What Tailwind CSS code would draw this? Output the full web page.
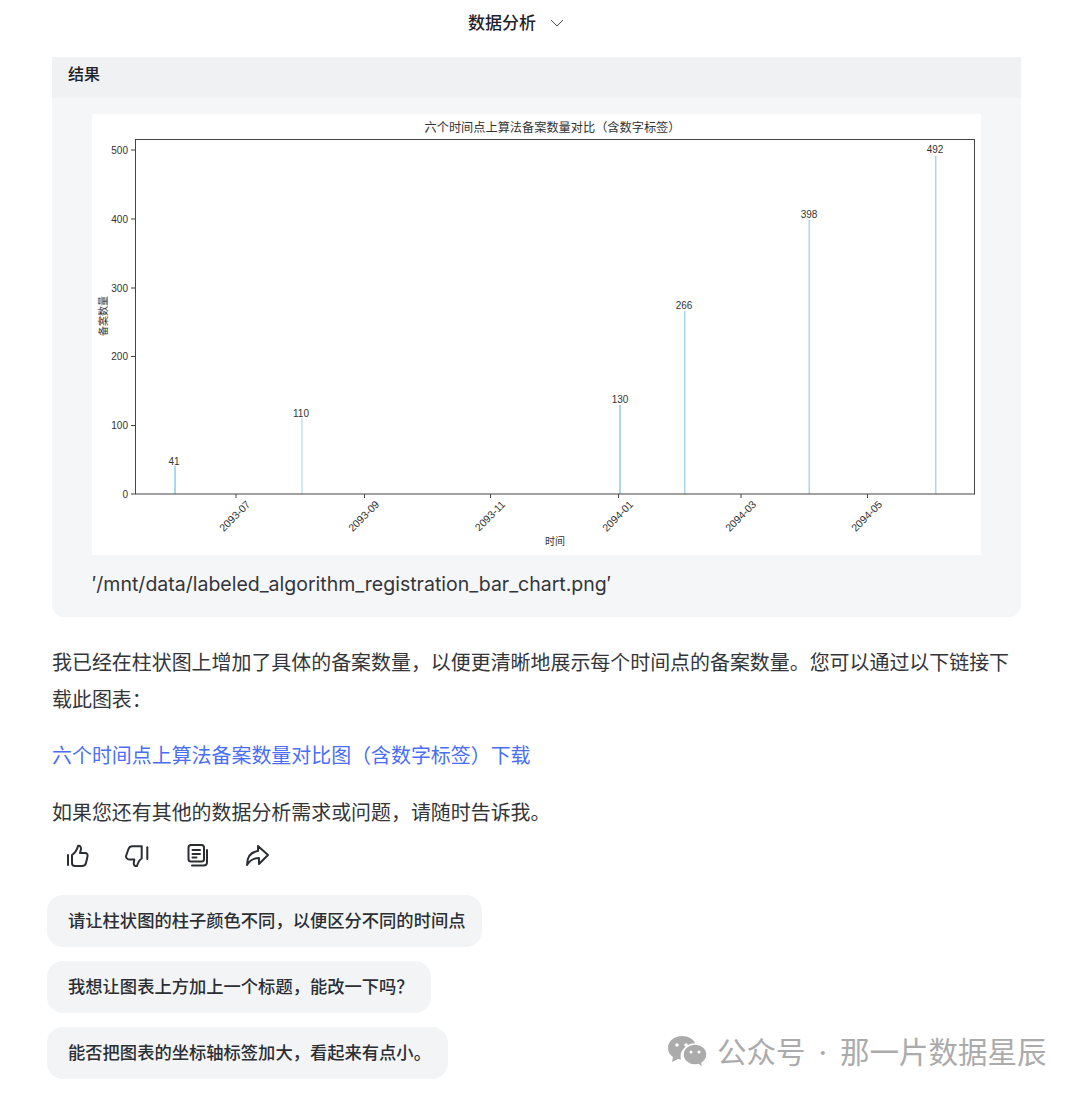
<!DOCTYPE html>
<html lang="zh-CN">
<head>
    <meta charset="UTF-8">
    <title>数据分析</title>
    <script src="https://cdn.jsdelivr.net/npm/@tailwindcss/browser@4"></script>
</head>
<body class="bg-white font-['Inter','Noto_Sans_CJK_SC',sans-serif] text-[#333538]">
<div class="relative w-[1080px] h-[1094px] overflow-hidden">

    <!-- Title -->
    <div class="h-[46px] flex items-center justify-center gap-[14px] pr-[48px] text-[17px] leading-[46px] font-medium text-[#1f2329]">
        <span>数据分析</span>
        <svg class="w-[14px] h-[8px]" viewBox="0 0 14 8" fill="none" stroke="#4a4d52" stroke-width="1"><path d="M1 1l6 6 6-6"/></svg>
    </div>

    <!-- Result card -->
    <div class="ml-[52px] mt-[11px] w-[969px] h-[560px] bg-[#f5f6f8] rounded-b-xl">
        <div class="h-[41px] pl-4 bg-[#f0f1f3] text-base leading-[35px] font-medium text-[#1f2329]">结果</div>
        <div class="pl-10 pt-4">
            <svg class="block w-[889px] h-[441px] bg-white" viewBox="92 114 889 441" font-family="'Liberation Sans','Noto Sans CJK SC',sans-serif" fill="#333">
                <text x="552.500" y="132" font-size="12.200" text-anchor="middle" font-family="'Noto Sans CJK SC',sans-serif">六个时间点上算法备案数量对比（含数字标签）</text>
                <!-- bars -->
                <g fill="#a9d7f0">
                    <rect x="174" y="466" width="2" height="28"/>
                    <rect x="301" y="418" width="2" height="76" fill="#d3e9f6"/>
                    <rect x="619" y="405" width="2" height="89"/>
                    <rect x="684" y="311" width="1.500" height="183"/>
                    <rect x="808.500" y="220" width="1.500" height="274"/>
                    <rect x="935" y="156" width="1.500" height="338"/>
                </g>
                <!-- plot frame -->
                <rect x="135.500" y="139.500" width="839" height="354.500" fill="none" stroke="#444" stroke-width="1"/>
                <!-- ticks -->
                <g stroke="#444" stroke-width="1">
                    <path d="M131 150h4M131 219h4M131 288h4M131 356.500h4M131 425.500h4M131 494h4"/>
                    <path d="M236 494v4M364.500 494v4M490.500 494v4M618.500 494v4M741 494v4M867.500 494v4"/>
                </g>
                <g font-size="10" text-anchor="end">
                    <text x="128" y="154">500</text>
                    <text x="128" y="223">400</text>
                    <text x="128" y="292">300</text>
                    <text x="128" y="360">200</text>
                    <text x="128" y="429">100</text>
                    <text x="128" y="498">0</text>
                </g>
                <!-- value labels -->
                <g font-size="10" text-anchor="middle">
                    <text x="174" y="465">41</text>
                    <text x="301" y="417">110</text>
                    <text x="620" y="403">130</text>
                    <text x="684" y="309">266</text>
                    <text x="809" y="218">398</text>
                    <text x="935" y="153">492</text>
                </g>
                <!-- x labels -->
                <g font-size="10.500" text-anchor="end">
                    <text transform="translate(251 505) rotate(-45)">2093-07</text>
                    <text transform="translate(380 505) rotate(-45)">2093-09</text>
                    <text transform="translate(506 505) rotate(-45)">2093-11</text>
                    <text transform="translate(634 505) rotate(-45)">2094-01</text>
                    <text transform="translate(757 505) rotate(-45)">2094-03</text>
                    <text transform="translate(883 505) rotate(-45)">2094-05</text>
                </g>
                <text x="555" y="545" font-size="10" text-anchor="middle" font-family="'Noto Sans CJK SC',sans-serif">时间</text>
                <text transform="translate(107 316) rotate(-90)" font-size="10" text-anchor="middle" font-family="'Noto Sans CJK SC',sans-serif">备案数量</text>
            </svg>
            <p class="mt-[14px] text-[19.500px] leading-[30px]">′/mnt/data/labeled_algorithm_registration_bar_chart.png′</p>
        </div>
    </div>

    <!-- Answer text -->
    <div class="ml-[52px] w-[969px] mt-[28px] text-[19.950px] leading-[37px]">
        <p>我已经在柱状图上增加了具体的备案数量，以便更清晰地展示每个时间点的备案数量。您可以通过以下链接下载此图表：</p>
        <p class="mt-[19px] text-[#4a6ef5]">六个时间点上算法备案数量对比图（含数字标签）下载</p>
        <p class="mt-[20px]">如果您还有其他的数据分析需求或问题，请随时告诉我。</p>
    </div>

    <!-- Actions -->
    <div class="ml-[65px] mt-[11px] flex items-center gap-[36px] text-[#2b2e33]">
        <svg class="w-6 h-6" viewBox="0 0 24 24" fill="none" stroke="currentColor" stroke-width="2" stroke-linejoin="round" stroke-linecap="round"><path d="M3 12v10"/><path d="M7 12c3-2 5-5 6-9 2-1 3 1 3 3l-1 4h5c2 0 3 1.500 2.500 3.500L21 20c-.5 2-2 3-4 3H10c-1.500 0-3-1-3-3z"/></svg>
        <svg class="w-6 h-6" viewBox="0 0 24 24" fill="none" stroke="currentColor" stroke-width="2" stroke-linejoin="round" stroke-linecap="round"><path d="M22.300 4.300V16"/><path d="M16.700 3.300V15.500c-2.500 1.500-3.700 4-4.700 7.500-2 .5-3.500-1-3.200-3l.5-3.500H4.500C2 16.500.6 14.500 1.200 12.500L3.500 6c.6-1.800 2-2.700 4-2.700z"/></svg>
        <svg class="w-6 h-6" viewBox="0 0 24 24" fill="none" stroke="currentColor" stroke-width="2" stroke-linejoin="round" stroke-linecap="round"><path d="M6 2h10.500C18 2 19 3 19 4.500V16c0 1.500-1 2.500-2.500 2.500H6c-1.500 0-2.500-1-2.500-2.500V4.500C3.500 3 4.500 2 6 2z"/><path d="M7.500 7h7.500M7.500 11h7.500M7.500 14.500h4"/><path d="M22 7v12c0 2-1.500 3.500-3.500 3.500H7"/></svg>
        <svg class="w-6 h-6" viewBox="0 0 24 24" fill="none" stroke="currentColor" stroke-width="2" stroke-linejoin="round" stroke-linecap="round"><path d="M13 3l10 9-9 9v-6c-5 0-9 2-12 7 0-8 4-13 11-14z"/></svg>
    </div>

    <!-- Suggestions -->
    <div class="ml-[47px] mt-[28px] flex flex-col items-start gap-[14px] text-[17.300px] font-medium text-[#2b2e33]">
        <div class="h-[52px] pl-[21px] pr-[17px] flex items-center rounded-2xl bg-[#f3f4f5]">请让柱状图的柱子颜色不同，以便区分不同的时间点</div>
        <div class="h-[52px] pl-[21px] pr-[17px] flex items-center rounded-2xl bg-[#f3f4f5]">我想让图表上方加上一个标题，能改一下吗？</div>
        <div class="h-[52px] pl-[21px] pr-[17px] flex items-center rounded-2xl bg-[#f3f4f5]">能否把图表的坐标轴标签加大，看起来有点小。</div>
    </div>

    <!-- Watermark -->
    <div class="absolute left-[667px] top-[1033px] flex items-center text-[#ababab] text-[29.500px] leading-[38px] whitespace-nowrap">
        <svg class="w-[41px] h-[34px] mr-[9px]" viewBox="0 0 41 34">
            <path fill="#ababab" d="M15 1C7 1 1 6 1 13c0 4 2 7 5 9l-1 5 6-3c1 .3 2 .4 3 .4-.3-1-.5-2-.5-3 0-7 6-12 13-12h2C27 4 21 1 15 1z"/>
            <path fill="#ababab" stroke="#fff" stroke-width="1.500" d="M28 9c-6.500 0-12 4.500-12 10.500S21.500 30 28 30c1.300 0 2.500-.2 3.500-.5L36 33l-1-5c3-2 5-5 5-8.500C40 13.500 34.500 9 28 9z"/>
            <g fill="#fff"><circle cx="10" cy="10" r="1.800"/><circle cx="19" cy="10" r="1.800"/><circle cx="24" cy="17" r="1.500"/><circle cx="32" cy="17" r="1.500"/></g>
        </svg>
        <span>公众号</span>
        <span class="w-[34.500px] text-center">·</span>
        <span>那一片数据星辰</span>
    </div>
</div>
</body>
</html>
